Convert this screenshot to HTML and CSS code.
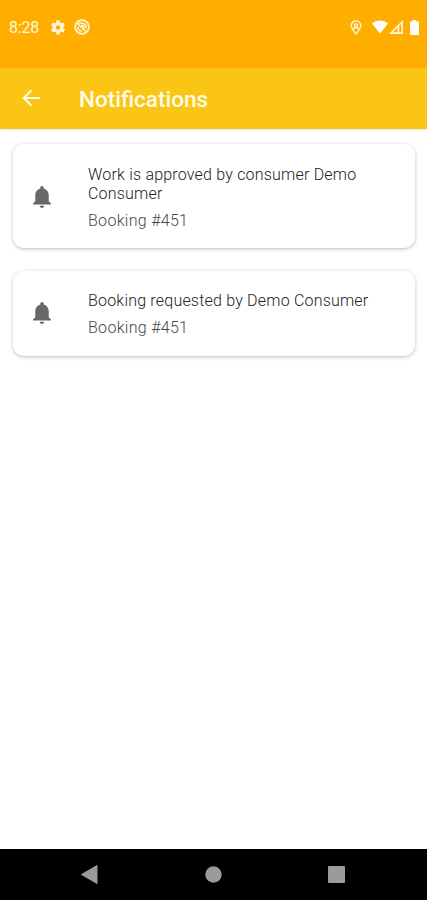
FILE: index.html
```html
<!DOCTYPE html>
<html lang="en">
<head>
<meta charset="utf-8">
<title>Notifications</title>
<link rel="stylesheet" href="styles.css">
</head>
<body>
<div class="screen">
  <div class="status">
    <span class="time">8:28</span>
    <svg class="gear" width="14" height="15" viewBox="2 2 20 20"><path fill="#fff6dc" fill-rule="evenodd" d="M19.4 13a7.500 7.500 0 0 0 0-2l2.100-1.600c.2-.2.2-.4.1-.6l-2-3.500c-.1-.2-.4-.3-.6-.2l-2.500 1a7.300 7.300 0 0 0-1.700-1L14.500 2.400c0-.2-.3-.4-.5-.4h-4c-.2 0-.5.2-.5.4l-.4 2.700c-.6.200-1.200.6-1.700 1l-2.500-1c-.2-.1-.5 0-.6.2l-2 3.500c-.1.2-.1.4.1.6L4.600 11a7.500 7.500 0 0 0 0 2l-2.100 1.600c-.2.2-.2.4-.1.6l2 3.500c.1.2.4.3.6.2l2.500-1c.5.4 1.100.8 1.700 1l.4 2.700c0 .2.300.4.5.4h4c.2 0 .5-.2.5-.4l.4-2.700c.6-.2 1.200-.6 1.700-1l2.500 1c.2.1.5 0 .6-.2l2-3.500c.1-.2.1-.4-.1-.6zM12 15.300a3.300 3.300 0 1 1 0-6.600 3.300 3.300 0 0 1 0 6.600z"/></svg>
    <svg class="circle" width="16" height="16" viewBox="0 0 16 16" fill="none" stroke="#fff6dc"><circle cx="8" cy="8" r="6.900" stroke-width="1.700"/><path stroke-width="1.500" d="M3.500 4.500l8.300 8M5 4.600c3.500-1.600 7.500.8 7 4.700M7 6.500c1.800-.3 3.200 1 3 2.800M4 7.500c-.6 2.500 1.200 4.700 4 4.500"/></svg>
    <svg class="pin" width="12" height="15" viewBox="0 0 12 15" fill="none" stroke="#fff6dc" stroke-width="1.400"><path d="M6 14C3 10.500 1.200 8 1.200 5.600a4.800 4.800 0 0 1 9.600 0C10.800 8 9 10.500 6 14z"/><circle cx="6" cy="5.500" r="1.600"/><path d="M3.400 8.900c1.600-1.300 3.600-1.300 5.200 0"/></svg>
    <svg class="wifi" width="16" height="14" viewBox="0 0 16 14" fill="#fff"><path d="M0 3.600C4.700-.4 11.300-.4 16 3.600L8 13.500z"/></svg>
    <svg class="signal" width="14" height="14" viewBox="0 0 14 14" fill="none" stroke="#fff6dc" stroke-width="1.700"><path d="M13.100 2v11.100H2z"/><path d="M9.400 6v7.200"/></svg>
    <svg class="battery" width="9" height="15" viewBox="0 0 9 15" fill="#fff"><path d="M2.700 0h3.600v1.500H8c.6 0 1 .4 1 1V14c0 .6-.4 1-1 1H1c-.6 0-1-.4-1-1V2.500c0-.6.4-1 1-1h1.700z"/></svg>
  </div>
  <header class="bar">
    <svg class="back" width="18" height="18" viewBox="0 0 18 18" fill="none" stroke="#fffbe8" stroke-width="2"><path d="M9.400 1.200L1.700 9l7.700 7.800M2 9h16"/></svg>
    <h1>Notifications</h1>
  </header>
  <main class="list">
    <article class="card first">
      <svg class="bell" width="18" height="22" viewBox="4 2.500 16 19.500" preserveAspectRatio="none" fill="#686868"><path d="M12 22c1.100 0 2-.9 2-2h-4c0 1.100.9 2 2 2zm6-6v-5c0-3.070-1.640-5.640-4.500-6.320V4c0-.83-.67-1.500-1.500-1.500s-1.500.67-1.500 1.500v.68C7.630 5.360 6 7.920 6 11v5l-2 2v1h16v-1z"/></svg>
      <div class="text">
        <p class="title">Work is approved by consumer Demo<br>Consumer</p>
        <p class="sub">Booking #451</p>
      </div>
    </article>
    <article class="card second">
      <svg class="bell" width="18" height="22" viewBox="4 2.500 16 19.500" preserveAspectRatio="none" fill="#686868"><path d="M12 22c1.100 0 2-.9 2-2h-4c0 1.100.9 2 2 2zm6-6v-5c0-3.070-1.640-5.640-4.500-6.320V4c0-.83-.67-1.500-1.500-1.500s-1.500.67-1.500 1.500v.68C7.630 5.360 6 7.920 6 11v5l-2 2v1h16v-1z"/></svg>
      <div class="text">
        <p class="title">Booking requested by Demo Consumer</p>
        <p class="sub">Booking #451</p>
      </div>
    </article>
  </main>
  <nav class="nav">
    <svg width="17" height="19" viewBox="0 0 17 19" fill="#9b9b9b"><path d="M16 .5v18L.5 9.500z" stroke="#9b9b9b" stroke-linejoin="round"/></svg>
    <svg width="17" height="17" viewBox="0 0 17 17" fill="#9b9b9b"><circle cx="8.500" cy="8.500" r="8.200"/></svg>
    <svg width="17" height="17" viewBox="0 0 17 17" fill="#9b9b9b"><rect width="17" height="17" rx="1"/></svg>
  </nav>
</div>
</body>
</html>
```
FILE: styles.css
```css
* { box-sizing: border-box; }
body { margin: 0; background: #fff; font-family: Roboto, sans-serif; }
h1, p { margin: 0; }
svg { display: block; flex: none; }
.screen { width: 427px; height: 900px; display: flex; flex-direction: column; overflow: hidden; }
.status { height: 68px; flex: none; background: #ffae00; display: flex; align-items: center; padding: 0 8px 14px 9px; }
.time { width: 42px; font-size: 16px; line-height: 20px; color: #fff6dc; letter-spacing: -0.2px; padding-top: 1px; }
.circle { margin-left: 9px; }
.pin { margin-left: auto; }
.wifi { margin-left: 10px; }
.signal { margin-left: 1px; }
.battery { margin-left: 7px; }
.bar { height: 61px; flex: none; background: #fac515; display: flex; align-items: center; padding-left: 22px; box-shadow: 0 1px 2px rgba(0, 0, 0, 0.1); }
.back { margin-bottom: 1px; }
.bar h1 { margin-left: 39px; padding-top: 1px; font-size: 22.5px; line-height: 26px; font-weight: 500; color: #fffbe8; }
.list { flex: 1; padding: 15px 12px 0 13px; }
.card { display: flex; align-items: center; border-radius: 11px; background: #fff; padding-left: 20px; box-shadow: 0 1px 4px rgba(0, 0, 0, 0.22), 0 1px 1px rgba(0, 0, 0, 0.05); }
.first { height: 104px; margin-bottom: 23px; }
.second { height: 85px; }
.first .text { padding-top: 3px; }
.first .bell { margin-top: 1px; }
.second .bell { margin-bottom: 1px; }
.text { margin-left: 37px; padding-top: 2px; white-space: nowrap; }
.title { font-size: 16px; line-height: 19px; color: #222; font-weight: 300; letter-spacing: 0.2px; }
.sub { margin-top: 8px; font-size: 16px; line-height: 20px; color: #484848; font-weight: 300; letter-spacing: 0.3px; }
.nav { height: 51px; flex: none; background: #000; display: flex; align-items: center; justify-content: space-between; padding: 0 82px 0 81px; }
```
